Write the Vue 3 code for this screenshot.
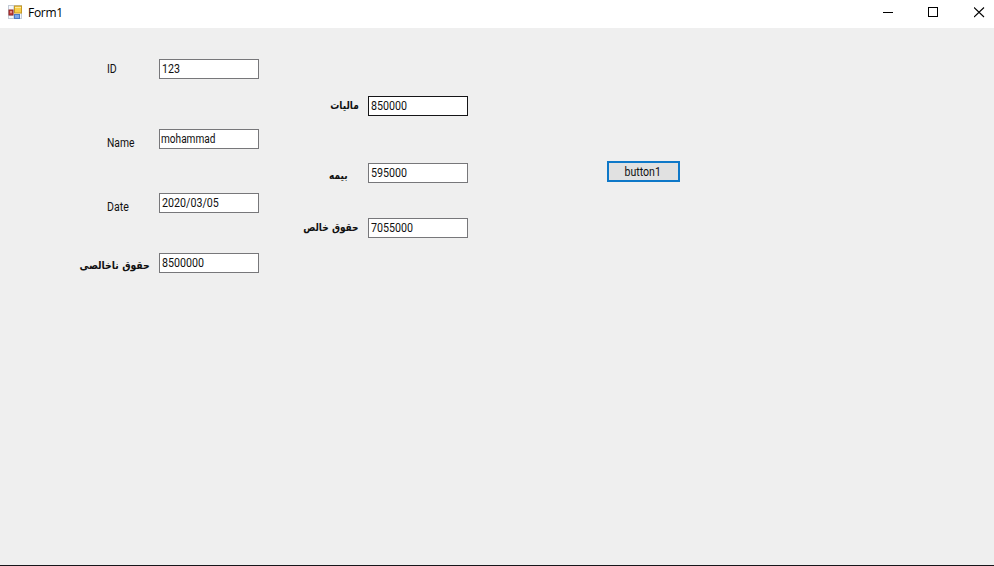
<script setup>
import { ref } from 'vue'

const employee = ref([
  { key: 'id', label: 'ID', value: '123' },
  { key: 'name', label: 'Name', value: 'mohammad' },
  { key: 'date', label: 'Date', value: '2020/03/05' },
  { key: 'gross', label: 'حقوق ناخالصی', value: '8500000', rtl: true },
])

const salary = ref([
  { key: 'tax', label: 'مالیات', value: '850000', rtl: true },
  { key: 'insurance', label: 'بیمه', value: '595000', rtl: true },
  { key: 'net', label: 'حقوق خالص', value: '7055000', rtl: true },
])
</script>

<template>
  <main class="window">
    <header class="titlebar">
      <svg class="app-icon" width="14" height="14" viewBox="0 0 14 14">
        <rect x="0.5" y="0.5" width="13" height="13" fill="#f4f7fb" stroke="#c3cbd6" />
        <path d="M5.5 1v12M1 10.5h5" stroke="#d3dbe6" />
        <rect x="6.5" y="1" width="7" height="7" fill="#f8cf4c" stroke="#c79a25" />
        <path d="M7 2.5h6" stroke="#fdeaa0" />
        <rect x="1" y="5" width="4" height="5" fill="#c8433c" stroke="#8f2424" />
        <rect x="2" y="6" width="2" height="2" fill="#eb8b80" />
        <rect x="6.5" y="9.5" width="5" height="4" fill="#7ea9ea" stroke="#4a7ac6" />
      </svg>
      <span class="title">Form1</span>
      <div class="controls">
        <svg width="11" height="11" viewBox="0 0 11 11"><path d="M1 5.5h10" stroke="#000" /></svg>
        <svg width="11" height="11" viewBox="0 0 11 11"><rect x="0.5" y="0.5" width="9" height="9" fill="none" stroke="#000" /></svg>
        <svg width="11" height="11" viewBox="0 0 11 11"><path d="M0 0.5l10 9.5M10 0.5l-10 9.5" stroke="#000" stroke-width="1.1" /></svg>
      </div>
    </header>
    <section class="form">
      <div class="column employee">
        <label v-for="f in employee" :key="f.key" class="field" :class="f.key">
          <span class="caption" :class="{ rtl: f.rtl }" :dir="f.rtl ? 'rtl' : 'ltr'"><span class="text">{{ f.label }}</span></span>
          <span class="box"><input v-model="f.value" type="text" spellcheck="false" /></span>
        </label>
      </div>
      <div class="column salary">
        <label v-for="f in salary" :key="f.key" class="field" :class="f.key">
          <span class="caption rtl" dir="rtl"><span class="text">{{ f.label }}</span></span>
          <span class="box"><input v-model="f.value" type="text" spellcheck="false" /></span>
        </label>
      </div>
      <button class="action" type="button"><span class="action-text">button1</span></button>
    </section>
  </main>
</template>

<style>
body {
  margin: 0;
  overflow: hidden;
}
</style>

<style scoped>
.window {
  box-sizing: border-box;
  display: flex;
  flex-direction: column;
  width: 994px;
  height: 566px;
  background: #efefef;
  border-bottom: 1px solid #17151a;
  font-family: Roboto, "Liberation Sans", sans-serif;
  font-size: 12px;
  color: #111;
}
.titlebar {
  box-sizing: border-box;
  display: flex;
  align-items: flex-start;
  height: 28px;
  padding: 5px 9px 0 8px;
  background: #fff;
}
.title {
  margin: 0 0 0 6px;
  font: 12px/16px "Open Sans", sans-serif;
  letter-spacing: -0.3px;
  color: #000;
}
.controls {
  display: flex;
  gap: 35px;
  margin: 2px 0 0 auto;
}
.controls svg,
.app-icon {
  display: block;
}
.form {
  display: flex;
  align-items: flex-start;
  flex: 1;
}
.column {
  display: flex;
  flex-direction: column;
}
.employee {
  width: 259px;
  padding-top: 31px;
}
.salary {
  width: 209px;
  padding-top: 68px;
}
.field {
  display: flex;
  justify-content: flex-end;
  height: 20px;
}
.name { margin-top: 50px; }
.date { margin-top: 44px; }
.gross { margin-top: 40px; }
.insurance { margin-top: 47px; }
.net { margin-top: 35px; }
.caption {
  flex: none;
  width: 52px;
  line-height: 20px;
  white-space: nowrap;
}
.name .caption,
.date .caption {
  padding-top: 4px;
}
.caption.rtl {
  width: auto;
  margin-right: 9px;
  font-family: "DejaVu Sans", sans-serif;
  font-weight: 700;
  font-size: 11px;
}
.gross .caption { padding-top: 3px; }
.insurance .caption.rtl {
  padding-top: 3px;
  margin-right: 20px;
}
.text {
  display: inline-block;
  transform: scaleX(0.88);
  transform-origin: left center;
}
.name .text { transform: scaleX(0.86); }
.rtl .text {
  transform: scaleX(0.85);
  transform-origin: right center;
}
.salary .rtl .text { transform: scaleX(0.82); }
.box {
  box-sizing: border-box;
  flex: none;
  width: 100px;
  height: 20px;
  padding-left: 2px;
  border: 1px solid #77777a;
  background: #fff;
  overflow: hidden;
}
.box input {
  display: block;
  width: 108px;
  height: 18px;
  margin: 0;
  padding: 0;
  border: 0;
  background: transparent;
  font: inherit;
  color: inherit;
  outline: none;
  transform: scaleX(0.89);
  transform-origin: left center;
}
.name .box { padding-left: 1px; }
.name .box input { transform: scaleX(0.84); }
.tax .box { border-color: #151517; }
.action {
  box-sizing: border-box;
  width: 73px;
  height: 21px;
  margin: 133px 0 0 139px;
  padding: 1px 2px 0 0;
  border: 2px solid #0e78c8;
  border-radius: 0;
  background: #e1e1e1;
  font: inherit;
  line-height: 16px;
  color: inherit;
}
.action-text {
  display: inline-block;
  transform: scaleX(0.88);
}
</style>
